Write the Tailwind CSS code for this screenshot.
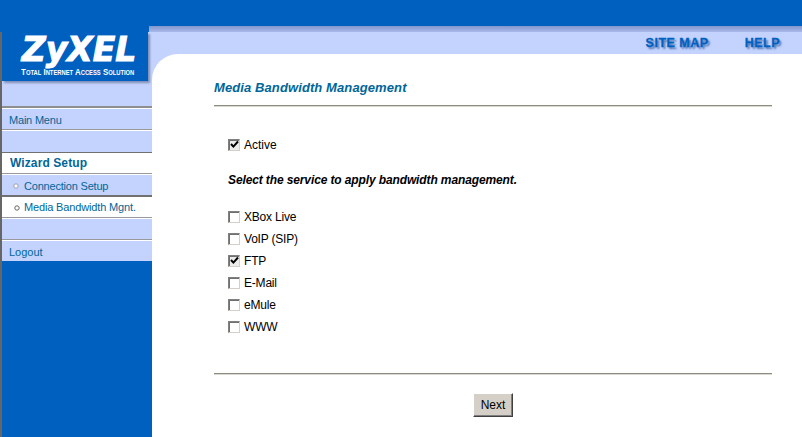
<!DOCTYPE html>
<html lang="en">
<head>
    <meta charset="UTF-8">
    <title>Media Bandwidth Management</title>
    <script src="https://cdn.jsdelivr.net/npm/@tailwindcss/browser@4"></script>
</head>
<body class="bg-white font-['Liberation_Sans',Arial,sans-serif] overflow-hidden">
    <div class="w-[802px] h-[437px] flex flex-col overflow-hidden">
        <div class="h-[26px] bg-[#0060c0] shrink-0"></div>
        <div class="flex flex-1 min-h-0">
            <!-- sidebar -->
            <aside class="w-[152px] shrink-0 bg-[#0060c0] flex flex-col border-l-2 border-[#666666]">
                <div class="h-[6px] shrink-0 -ml-[2px] w-[152px] bg-linear-to-b from-[#8196cc] to-[#a9b9ea]">
                    <div class="h-full w-[149px] bg-[#0060c0]"></div>
                </div>
                <div class="h-[74px] shrink-0 bg-[#c4d3fd]">
                    <div class="w-[146px] h-[49px] bg-[#0060c0] shadow-[2px_2px_2px_#7f8fb8] flex flex-col items-center">
                        <div class="h-[34px] pl-[8px] text-white font-['DejaVu_Sans'] font-bold italic text-[33px] leading-[36px] [-webkit-text-stroke:1px_#ffffff]">ZyXEL</div>
                        <div class="mt-[1px] pl-[6px] text-white font-bold text-[9.5px] leading-[10px] [font-variant:small-caps] scale-x-[0.83] whitespace-nowrap">Total Internet Access Solution</div>
                    </div>
                </div>
                <nav class="flex flex-col text-[#006699] text-[11px]">
                    <a class="h-[23px] bg-[#c4d3fd] border-t-2 border-[#8f8f8f] shadow-[inset_0_1px_0_#ffffff] pl-[7px] flex items-center pt-[3px] tracking-[-0.2px]">Main Menu</a>
                    <div class="h-[23px] bg-[#c4d3fd] border-t-1 border-[#999999] shadow-[inset_0_1px_0_#ffffff]"></div>
                    <a class="h-[21px] bg-white border-t-1 border-[#707070] pl-[8px] flex items-center font-bold text-[12px] tracking-[0.1px]">Wizard Setup</a>
                    <a class="h-[22px] bg-[#c4d3fd] border-t-1 border-[#999999] shadow-[inset_0_1px_0_#ffffff] pl-[11px] flex items-center gap-[5px] pt-[3px]">
                        <svg width="6" height="6" viewBox="0 0 6 6"><circle cx="3" cy="3" r="2.2" fill="#ffffff" stroke="#9a9fb0" stroke-width="1"/></svg>
                        <span class="tracking-[-0.2px]">Connection Setup</span>
                    </a>
                    <a class="h-[22px] bg-white border-t-2 border-[#707070] pl-[12px] flex items-center gap-[4px] pt-[1px]">
                        <svg width="6" height="6" viewBox="0 0 6 6"><circle cx="3" cy="3" r="2.2" fill="#ffffff" stroke="#666666" stroke-width="1"/></svg>
                        <span class="tracking-[-0.15px]">Media Bandwidth Mgnt.</span>
                    </a>
                    <div class="h-[22px] bg-[#c4d3fd] border-t-1 border-[#999999] shadow-[inset_0_1px_0_#ffffff]"></div>
                    <a class="h-[22px] bg-[#c4d3fd] border-t-1 border-[#999999] shadow-[inset_0_1px_0_#ffffff] pl-[7px] flex items-center pt-[3px]">Logout</a>
                </nav>
            </aside>
            <!-- right column -->
            <div class="flex-1 flex flex-col bg-[#c4d3fd]">
                <div class="h-[6px] shrink-0 bg-linear-to-b from-[#8196cc] to-[#a9b9ea]"></div>
                <div class="h-[22px] shrink-0 flex justify-end items-center gap-[36px] pr-[22px] text-[#0060c0] font-bold text-[12.5px] tracking-[0.5px] [-webkit-text-stroke:0.3px_#0060c0] [text-shadow:2px_2px_2px_#4a70b0]">
                    <a>SITE MAP</a>
                    <a>HELP</a>
                </div>
                <main class="flex-1 bg-white rounded-tl-[26px] pl-[62px] pr-[30px] pt-[26px] flex flex-col">
                    <h1 class="text-[#006699] font-bold italic text-[13px] leading-[16px] tracking-[0.1px]">Media Bandwidth Management</h1>
                    <div class="mt-[9px] h-[2px] bg-[#8c8c80] border-b border-[#d8d8d0]"></div>
                    <div class="pl-[14px] text-[12px] text-black">
                        <label class="mt-[31px] h-[14px] flex items-center gap-[4px]">
                            <span class="w-[12px] h-[12px] -mt-[1px] flex items-center justify-center bg-[#ececec] border border-t-[#808080] border-l-[#808080] border-r-[#d4d0c8] border-b-[#d4d0c8] shadow-[inset_1px_1px_0_#707070]">
                                <svg width="9" height="9" viewBox="0 0 9 9"><path d="M1 4l2.4 2.6L8 1.5" fill="none" stroke="#000" stroke-width="2"/></svg>
                            </span>
                            Active
                        </label>
                        <p class="mt-[21px] font-bold italic leading-[14px] tracking-[-0.12px]">Select the service to apply bandwidth management.</p>
                        <ul class="mt-[23px] flex flex-col gap-[8px] tracking-[-0.2px]">
                            <li class="h-[14px] flex items-center gap-[4px]"><span class="w-[12px] h-[12px] -mt-[1px] bg-white border border-t-[#808080] border-l-[#808080] border-r-[#d4d0c8] border-b-[#d4d0c8] shadow-[inset_1px_1px_0_#707070]"></span>XBox Live</li>
                            <li class="h-[14px] flex items-center gap-[4px]"><span class="w-[12px] h-[12px] -mt-[1px] bg-white border border-t-[#808080] border-l-[#808080] border-r-[#d4d0c8] border-b-[#d4d0c8] shadow-[inset_1px_1px_0_#707070]"></span>VoIP (SIP)</li>
                            <li class="h-[14px] flex items-center gap-[4px]"><span class="w-[12px] h-[12px] -mt-[1px] flex items-center justify-center bg-[#ececec] border border-t-[#808080] border-l-[#808080] border-r-[#d4d0c8] border-b-[#d4d0c8] shadow-[inset_1px_1px_0_#707070]"><svg width="9" height="9" viewBox="0 0 9 9"><path d="M1 4l2.4 2.6L8 1.5" fill="none" stroke="#000" stroke-width="2"/></svg></span>FTP</li>
                            <li class="h-[14px] flex items-center gap-[4px]"><span class="w-[12px] h-[12px] -mt-[1px] bg-white border border-t-[#808080] border-l-[#808080] border-r-[#d4d0c8] border-b-[#d4d0c8] shadow-[inset_1px_1px_0_#707070]"></span>E-Mail</li>
                            <li class="h-[14px] flex items-center gap-[4px]"><span class="w-[12px] h-[12px] -mt-[1px] bg-white border border-t-[#808080] border-l-[#808080] border-r-[#d4d0c8] border-b-[#d4d0c8] shadow-[inset_1px_1px_0_#707070]"></span>eMule</li>
                            <li class="h-[14px] flex items-center gap-[4px]"><span class="w-[12px] h-[12px] -mt-[1px] bg-white border border-t-[#808080] border-l-[#808080] border-r-[#d4d0c8] border-b-[#d4d0c8] shadow-[inset_1px_1px_0_#707070]"></span>WWW</li>
                        </ul>
                    </div>
                    <div class="mt-[39px] h-[2px] bg-[#8c8c80] border-b border-[#d8d8d0]"></div>
                    <div class="mt-[18px] flex justify-center">
                        <button class="w-[40px] h-[24px] bg-[#d4d0c8] text-[12px] text-black border border-t-white border-l-white border-r-[#404040] border-b-[#404040] shadow-[inset_-1px_-1px_0_#808080]">Next</button>
                    </div>
                </main>
            </div>
        </div>
    </div>
</body>
</html>
